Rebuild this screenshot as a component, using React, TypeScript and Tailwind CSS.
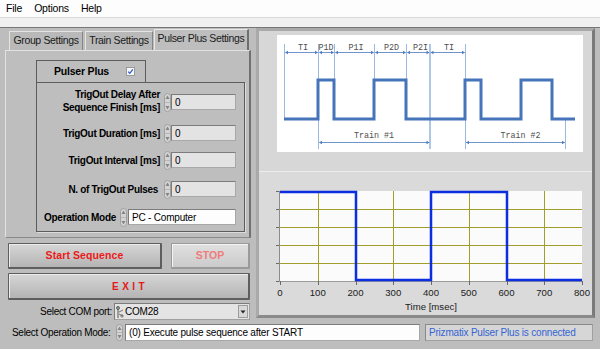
import React from "react";

const SANS = '"Liberation Sans", Arial, sans-serif';
const MONO = '"Liberation Mono", "Courier New", monospace';

function Spin({ h = 19 }: { h?: number }) {
  return (
    <svg width="7" height={h} viewBox={`0 0 7 ${h}`} className="shrink-0">
      <rect x="0.5" y="0.5" width="6" height={h - 1} rx="3" fill="#d3d3d3" stroke="#a0a0a0" />
      <line x1="1" y1={h / 2} x2="6" y2={h / 2} stroke="#b0b0b0" strokeWidth="0.8" />
      <path d="M3.5 2.5 L5.5 6 H1.5 Z" fill="#858585" />
      <path d={`M3.5 ${h - 2.5} L5.5 ${h - 6} H1.5 Z`} fill="#858585" />
    </svg>
  );
}

function NumBox({ value, w = 65, white = false }: { value: string; w?: number; white?: boolean }) {
  return (
    <div
      className={`h-[16px] shrink-0 border border-[#a8a8a8] border-t-[#7c7c7c] border-l-[#7c7c7c] flex items-center pl-[3px] text-[10px] text-black tracking-[-0.2px] ${white ? "bg-[#fdfdfd]" : "bg-[#e3e3e3]"}`}
      style={{ width: w }}
    >
      {value}
    </div>
  );
}

function Diagram() {
  const arrow = (x1: number, x2: number, y: number) => (
    <g>
      <line x1={x1 + 1} y1={y} x2={x2 - 1} y2={y} stroke="#6f95cc" strokeWidth="1" />
      <path d={`M${x1 + 0.5} ${y} l3 -1.8 v3.6 Z`} fill="#4f7cc0" />
      <path d={`M${x2 - 0.5} ${y} l-3 -1.8 v3.6 Z`} fill="#4f7cc0" />
    </g>
  );
  const vline = (x: number, y1: number, y2: number, w = 1) => (
    <line x1={x} y1={y1} x2={x} y2={y2} stroke="#9cb8e0" strokeWidth={w} />
  );
  const lbl = (x: number, y: number, t: string) => (
    <text x={x} y={y} textAnchor="middle" fontFamily={MONO} fontSize="8.4" fill="#505050">
      {t}
    </text>
  );
  return (
    <svg width="306" height="117" viewBox="0 0 306 117">
      <rect width="306" height="117" fill="#ffffff" />
      {vline(7.5, 9, 84)}
      {vline(41.5, 9, 114)}
      {vline(57.5, 9, 45)}
      {vline(97.5, 9, 45)}
      {vline(129.5, 9, 84)}
      {vline(153, 9, 114, 1.6)}
      {vline(188.5, 9, 114)}
      {vline(288.5, 84, 114)}
      <path
        d="M7 84 H41 V45 H57 V84 H97 V45 H129 V84 H188 V45 H204 V84 H244 V45 H275 V84 H298"
        fill="none"
        stroke="#4574b9"
        strokeWidth="3"
      />
      {arrow(7.5, 41.5, 17.5)}
      {arrow(41.5, 57.5, 17.5)}
      {arrow(57.5, 97.5, 17.5)}
      {arrow(97.5, 129.5, 17.5)}
      {arrow(129.5, 153, 17.5)}
      {arrow(153, 188.5, 17.5)}
      {lbl(26, 15, "TI")}
      {lbl(49, 15, "P1D")}
      {lbl(79, 15, "P1I")}
      {lbl(114.5, 15, "P2D")}
      {lbl(143.5, 15, "P2I")}
      {lbl(172, 15, "TI")}
      {arrow(41.5, 153, 107.5)}
      {arrow(188.5, 288.5, 107.5)}
      {lbl(97, 103, "Train #1")}
      {lbl(243.5, 103, "Train #2")}
    </svg>
  );
}

function Chart() {
  const L = 21;
  const T = 19;
  const W = 302;
  const H = 90;
  const dx = W / 8;
  const dy = H / 5;
  const xs = Array.from({ length: 9 }, (_, i) => L + dx * i);
  const ys = Array.from({ length: 6 }, (_, i) => T + dy * i);
  return (
    <svg width="333" height="143" viewBox="0 0 333 143" shapeRendering="crispEdges">
      <rect x={L} y={T} width={W} height={H} fill="#fbfbfb" />
      {xs.slice(1, 8).map((x, i) => (
        <rect key={"v" + i} x={Math.round(x)} y={T} width={1} height={H} fill="#a39d2c" />
      ))}
      {ys.slice(1, 5).map((y, i) => (
        <rect key={"h" + i} x={L} y={Math.round(y)} width={W} height={1} fill="#a39d2c" />
      ))}
      <rect x={L - 1} y={T} width={1} height={H + 1} fill="#8c8c8c" />
      <rect x={L - 1} y={T + H} width={W + 1} height={1} fill="#9a9a9a" />
      {ys.map((y, i) => (
        <rect key={"yt" + i} x={L - 4} y={Math.round(y)} width={3} height={1} fill="#6a6a6a" />
      ))}
      {xs.map((x, i) => (
        <rect key={"xt" + i} x={Math.round(x)} y={T + H} width={1} height={4} fill="#6a6a6a" />
      ))}
      <path
        d={`M${L} ${T + 1} H${Math.round(L + dx * 2)} V${T + H - 1} H${Math.round(L + dx * 4)} V${T + 1} H${Math.round(L + dx * 6)} V${T + H - 1} H${L + W}`}
        fill="none"
        stroke="#0b2fe0"
        strokeWidth="2.5"
        shapeRendering="auto"
      />
      {xs.map((x, i) => (
        <text key={"xl" + i} x={x} y={124} textAnchor="middle" fontFamily={SANS} fontSize="9.6" fill="#202020">
          {String(i * 100)}
        </text>
      ))}
      <text x={172} y={138} textAnchor="middle" fontFamily={SANS} fontSize="9.6" fill="#202020">
        Time [msec]
      </text>
    </svg>
  );
}

export default function App() {
  return (
    <div className="w-[600px] h-[349px] overflow-hidden flex flex-col bg-[#bdbdbd] text-black" style={{ fontFamily: SANS }}>
      {/* menu bar */}
      <div className="h-[17px] bg-[#fdfdfd] flex items-center pl-[6px] gap-[12px] text-[10.5px] tracking-[-0.2px]">
        <span>File</span>
        <span>Options</span>
        <span>Help</span>
      </div>
      <div className="h-[10px] bg-[#f0f0f0] border-t border-[#dadada]" />
      <div className="flex-1 flex flex-col border-t border-[#767676]">
        <div className="h-[293px] flex pl-[5px]">
          {/* left column */}
          <div className="w-[246px] flex flex-col">
            <div className="h-[22px] flex items-end pl-[4px]">
              <div className="w-[74px] h-[19px] bg-[#b9b9b9] border-t border-l border-[#e4e4e4] border-r border-r-[#858585] flex items-center justify-center text-[10.5px] tracking-[-0.35px] text-[#1a1a1a]">
                Group Settings
              </div>
              <div className="w-[68px] ml-[2px] h-[19px] bg-[#b9b9b9] border-t border-l border-[#e4e4e4] border-r border-r-[#858585] flex items-center justify-center text-[10.5px] tracking-[-0.35px] text-[#1a1a1a]">
                Train Settings
              </div>
              <div className="w-[95px] ml-[1px] h-[21px] bg-[#bebebe] border-t border-l border-[#e8e8e8] border-r-2 border-r-[#6e6e6e] flex items-center justify-center pb-[2px] text-[10.5px] tracking-[-0.35px] text-[#1a1a1a]">
                Pulser Plus Settings
              </div>
            </div>
            <div className="h-[188px] bg-[#bebebe] border-l border-t border-[#e2e2e2] border-r-2 border-r-[#707070] border-b border-b-[#8a8a8a] pl-[30px] pt-[9px]">
              <div className="w-[110px] h-[22px] border border-b-0 border-[#5c5c5c] flex items-center pl-[17px]">
                <span className="text-[10.5px] font-bold tracking-[-0.2px]">Pulser Plus</span>
                <svg width="9" height="9" viewBox="0 0 9 9" className="ml-[17px]">
                  <rect x="0.5" y="0.5" width="8" height="8" fill="#f4f6fb" stroke="#9a9a9a" />
                  <path d="M2.2 4.6 L3.8 6.3 L6.8 2.3" fill="none" stroke="#2e55c4" strokeWidth="1.2" />
                </svg>
              </div>
              <div className="w-[209px] h-[150px] border border-[#5c5c5c] shadow-[1px_1px_0_#dcdcdc] flex flex-col">
                <div className="mt-[6px] h-[26px] flex items-center justify-end pr-[8px]">
                  <div className="text-right text-[10px] font-bold leading-[12.7px] tracking-[-0.3px] mr-[4px]">
                    TrigOut Delay After
                    <br />
                    Sequence Finish [ms]
                  </div>
                  <Spin />
                  <NumBox value="0" />
                </div>
                <div className="mt-[10px] h-[16px] flex items-center justify-end pr-[8px]">
                  <span className="text-[10px] font-bold tracking-[-0.3px] mr-[4px]">TrigOut Duration [ms]</span>
                  <Spin />
                  <NumBox value="0" />
                </div>
                <div className="mt-[11px] h-[16px] flex items-center justify-end pr-[8px]">
                  <span className="text-[10px] font-bold tracking-[-0.3px] mr-[4px]">TrigOut Interval [ms]</span>
                  <Spin />
                  <NumBox value="0" />
                </div>
                <div className="mt-[13px] h-[16px] flex items-center justify-end pr-[8px]">
                  <span className="text-[10px] font-bold tracking-[-0.3px] mr-[6px]">N. of TrigOut Pulses</span>
                  <Spin />
                  <NumBox value="0" />
                </div>
                <div className="mt-[12px] h-[16px] flex items-center justify-end pr-[8px]">
                  <span className="text-[10px] font-bold tracking-[-0.3px] mr-[4px]">Operation Mode</span>
                  <Spin />
                  <div className="ml-[1px]">
                    <NumBox value="PC - Computer" w={108} white />
                  </div>
                </div>
              </div>
            </div>
            {/* buttons */}
            <div className="mt-[5px] flex">
              <div className="ml-[3px] w-[154px] h-[26px] rounded-[1px] border border-[#5e5e5e] border-b-2 border-r-2 bg-gradient-to-b from-[#d6d6d6] to-[#b4b4b4] shadow-[inset_1px_1px_0_#ececec] flex items-center justify-center text-[10.5px] font-bold text-[#ec1a1a] tracking-[0.1px]">
                Start Sequence
              </div>
              <div className="ml-[9px] w-[79px] h-[26px] rounded-[1px] border border-[#9a9a9a] border-b-2 border-r-2 bg-gradient-to-b from-[#e0e0e0] to-[#cbcbcb] shadow-[inset_1px_1px_0_#f4f4f4] flex items-center justify-center text-[10.5px] font-bold text-[#f07c7c]">
                STOP
              </div>
            </div>
            <div className="mt-[4px] ml-[3px] w-[242px] h-[27px] rounded-[1px] border border-[#5e5e5e] border-b-2 border-r-2 bg-gradient-to-b from-[#d6d6d6] to-[#b4b4b4] shadow-[inset_1px_1px_0_#ececec] flex items-center justify-center text-[10px] font-bold text-[#e41818] tracking-[3.4px] pl-[3px]">
              EXIT
            </div>
            <div className="mt-[3px] h-[17px] flex items-center">
              <div className="w-[107px] text-right text-[10px] tracking-[-0.3px]">Select COM port:</div>
              <div className="ml-[2px] w-[136px] h-[17px] bg-[#e4e4e4] border border-[#a0a0a0] border-t-[#7c7c7c] border-l-[#7c7c7c] flex items-center">
                <svg width="8" height="14" viewBox="0 0 8 14" className="ml-[1px] shrink-0">
                  <line x1="2" y1="1" x2="2" y2="13" stroke="#555" strokeWidth="1" />
                  <circle cx="2" cy="3" r="1.5" fill="none" stroke="#555" strokeWidth="0.9" />
                  <path d="M3 7 L7 5 M3 9 L7 11" stroke="#666" strokeWidth="0.9" />
                  <circle cx="6" cy="11" r="1.2" fill="none" stroke="#666" strokeWidth="0.8" />
                </svg>
                <span className="ml-[1px] text-[10px] tracking-[-0.2px]">COM28</span>
                <div className="ml-auto mr-[1px] w-[10px] h-[13px] bg-[#d8d8d8] border border-[#9c9c9c] flex items-center justify-center">
                  <svg width="6" height="4" viewBox="0 0 6 4">
                    <path d="M0.5 0.5 H5.5 L3 3.5 Z" fill="#222" />
                  </svg>
                </div>
              </div>
            </div>
          </div>
          {/* right panel */}
          <div className="ml-[5px] w-[339px] h-[290px] border-[3px] border-[#a9a9a9] border-r-[#7a7a7a] border-b-[#8a8a8a] bg-[#d7d7d7] flex flex-col">
            <div className="h-[141px] pl-[18px] pt-[4px]">
              <Diagram />
            </div>
            <div className="flex-1 border-t border-[#ededed] bg-[#dadada]">
              <Chart />
            </div>
          </div>
        </div>
        {/* bottom row */}
        <div className="mt-[3px] h-[17px] flex items-center pl-[12px]">
          <div className="w-[104px] text-[10px] tracking-[-0.3px] whitespace-nowrap">Select Operation Mode:</div>
          <Spin h={17} />
          <div className="ml-[2px] w-[295px] h-[17px] bg-[#fdfdfd] border border-[#a8a8a8] border-t-[#7c7c7c] border-l-[#7c7c7c] flex items-center pl-[3px] text-[10px] tracking-[-0.2px]">
            (0) Execute pulse sequence after START
          </div>
          <div className="ml-[5px] w-[168px] h-[17px] bg-[#d6d6d6] border border-[#a0a0a0] border-t-[#8a8a8a] border-l-[#8a8a8a] flex items-center pl-[3px] text-[10px] tracking-[-0.2px] text-[#3464d2]">
            Prizmatix Pulser Plus is connected
          </div>
        </div>
      </div>
    </div>
  );
}
